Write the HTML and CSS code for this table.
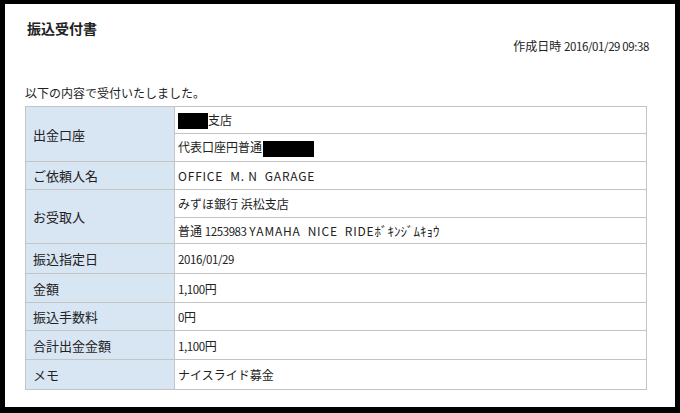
FILE: index.html
```html
<!DOCTYPE html>
<html lang="ja">
<head>
<meta charset="utf-8">
<link rel="stylesheet" href="styles.css">
</head>
<body>
<div class="page">
  <h1 class="title">振込受付書</h1>
  <div class="created">作成日時 <span class="num">2016/01/29 09:38</span></div>
  <p class="lead">以下の内容で受付いたしました。</p>
  <table class="info">
    <tr class="r1">
      <th rowspan="2">出金口座</th>
      <td><span class="redact r-a"></span>支店</td>
    </tr>
    <tr class="r2">
      <td>代表口座円普通<span class="redact r-b"></span></td>
    </tr>
    <tr class="r3">
      <th>ご依頼人名</th>
      <td class="wide">OFFICE&nbsp;&nbsp;M.&nbsp;N&nbsp;&nbsp;GARAGE</td>
    </tr>
    <tr class="r4">
      <th rowspan="2">お受取人</th>
      <td>みずほ銀行 浜松支店</td>
    </tr>
    <tr class="r5">
      <td>普通 <span class="num">1253983</span> <span class="wide">YAMAHA&nbsp;&nbsp;NICE&nbsp;&nbsp;RIDE</span><span class="kana">ﾎﾞｷﾝｼﾞﾑｷｮｳ</span></td>
    </tr>
    <tr class="r6">
      <th>振込指定日</th>
      <td class="num">2016/01/29</td>
    </tr>
    <tr class="r7">
      <th>金額</th>
      <td><span class="num">1,100</span>円</td>
    </tr>
    <tr class="r8">
      <th>振込手数料</th>
      <td><span class="num">0</span>円</td>
    </tr>
    <tr class="r9">
      <th>合計出金金額</th>
      <td><span class="num">1,100</span>円</td>
    </tr>
    <tr class="r10">
      <th>メモ</th>
      <td>ナイスライド募金</td>
    </tr>
  </table>
</div>
</body>
</html>
```

FILE: styles.css
```css
html, body {
  margin: 0;
  padding: 0;
}
body {
  background: #000;
  padding: 4px 5px 6px 5px;
  font-family: "Noto Sans CJK JP", "Noto Sans", sans-serif;
  color: #222;
}
.page {
  background: #fff;
  height: 403px;
  box-sizing: border-box;
  padding-top: 14px;
}
.title {
  margin: 0 0 0 22px;
  font-size: 14px;
  line-height: 20px;
  font-weight: bold;
  color: #222;
}
.created {
  text-align: right;
  padding-right: 26px;
  font-size: 12px;
  line-height: 16px;
}
.lead {
  margin: 31px 0 0 20px;
  font-size: 12px;
  line-height: 16px;
}
.info {
  margin: 5px 0 0 20px;
  width: 622px;
  border-collapse: collapse;
  border: 1px solid #c4c4c4;
  font-size: 12px;
}
.info th, .info td {
  border: 1px solid #c4c4c4;
  padding: 0 3px;
  text-align: left;
  vertical-align: middle;
  white-space: nowrap;
}
.info th {
  width: 138px;
  background: #d8e5f3;
  font-weight: normal;
  font-size: 13px;
  padding-left: 7px;
}
.info tr { height: 28px; }
.info .r1 { height: 27px; }
.info .r5 { height: 26px; }
.info .r6 { height: 30px; }
.info .r7 { height: 29px; }
.info .r9 { height: 29px; }
.info .r10 { height: 30px; }
.num {
  letter-spacing: -0.4px;
  font-size: 11.5px;
}
.wide {
  letter-spacing: 0.8px;
}
.kana {
  font-size: 13px;
}
.redact {
  display: inline-block;
  background: #000;
  vertical-align: middle;
}
.r-a {
  width: 30px;
  height: 16px;
}
.r-b {
  width: 51px;
  height: 16px;
  margin-left: 1px;
}
```
